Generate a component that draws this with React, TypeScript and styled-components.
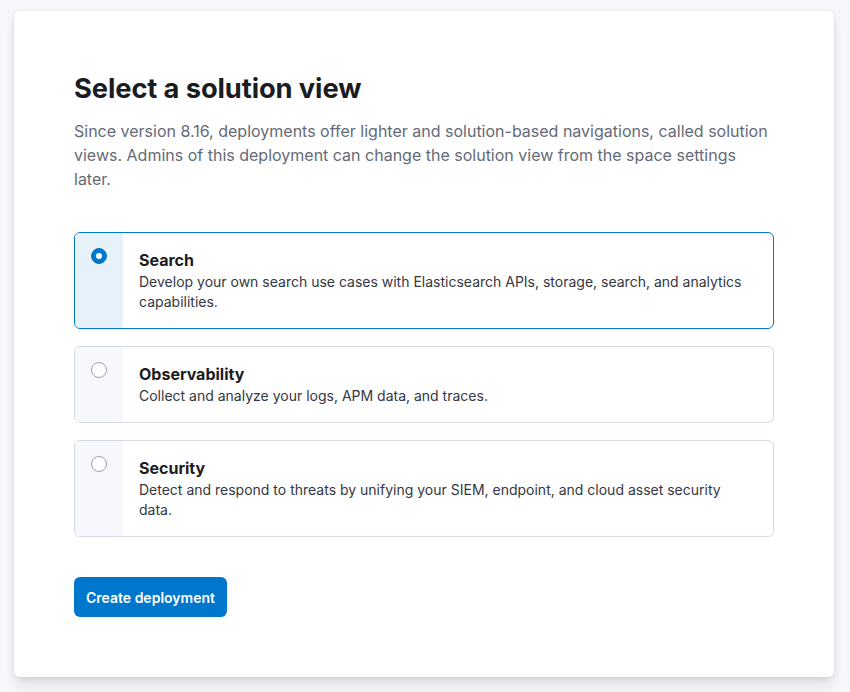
import React, { useState } from "react";
import styled, { createGlobalStyle } from "styled-components";

const Global = createGlobalStyle`
  html, body { margin: 0; padding: 0; background: #f6f7fb; }
  body { font-family: Inter, "Noto Sans", sans-serif; -webkit-font-smoothing: antialiased; }
  * { box-sizing: border-box; }
`;

const Page = styled.div`
  padding: 11px 16px 15px 14px;
  min-height: 692px;
`;

const Panel = styled.div`
  background: #fff;
  border-radius: 6px;
  box-shadow: 0 0.9px 4px -1px rgba(0,0,0,0.08), 0 2.6px 8px -1px rgba(0,0,0,0.06),
    0 5.7px 12px -1px rgba(0,0,0,0.05), 0 15px 15px -1px rgba(0,0,0,0.04);
  padding: 60px;
  display: flex;
  flex-direction: column;
`;

const Title = styled.h1`
  margin: 0;
  font-size: 27.3px;
  line-height: 36px;
  font-weight: 700;
  color: #1a1c21;
  letter-spacing: -0.1px;
`;

const Lead = styled.p`
  margin: 12px 0 0;
  font-size: 16px;
  line-height: 24px;
  color: #646a77;
`;

const Options = styled.div`
  margin-top: 41px;
  display: flex;
  flex-direction: column;
  gap: 17px;
`;

const Option = styled.label<{ $selected: boolean }>`
  display: flex;
  border: 1px solid ${(p) => (p.$selected ? "#0077cc" : "#d3dae6")};
  border-radius: 6px;
  overflow: hidden;
  cursor: pointer;
  background: #fff;
`;

const RadioCol = styled.div<{ $selected: boolean }>`
  width: 48px;
  flex: none;
  background: ${(p) => (p.$selected ? "#e6f1fa" : "#f7f8fc")};
  display: flex;
  justify-content: center;
  padding-top: 15px;
`;

const Radio = styled.span<{ $selected: boolean }>`
  width: 16px;
  height: 16px;
  border-radius: 50%;
  position: relative;
  background: ${(p) => (p.$selected ? "#0077cc" : "#fff")};
  border: 1px solid ${(p) => (p.$selected ? "#0077cc" : "#98a1b3")};
  &::after {
    content: "";
    display: ${(p) => (p.$selected ? "block" : "none")};
    position: absolute;
    left: 50%;
    top: 50%;
    width: 6px;
    height: 6px;
    margin: -3px 0 0 -3px;
    border-radius: 50%;
    background: #fff;
  }
`;

const Body = styled.div`
  padding: 15px 16px 16px 16px;
  display: flex;
  flex-direction: column;
`;

const OptTitle = styled.div`
  font-size: 16px;
  line-height: 24px;
  font-weight: 700;
  color: #1a1c21;
`;

const OptDesc = styled.div`
  font-size: 14px;
  line-height: 20px;
  color: #343741;
`;

const Button = styled.button`
  margin-top: 40px;
  align-self: flex-start;
  height: 40px;
  padding: 0 12px;
  border: none;
  border-radius: 6px;
  background: #0077cc;
  color: #fff;
  font-family: Inter, "Noto Sans", sans-serif;
  font-size: 14px;
  font-weight: 600;
  cursor: pointer;
`;

const options = [
  {
    id: "es",
    title: "Search",
    desc: "Develop your own search use cases with Elasticsearch APIs, storage, search, and analytics capabilities.",
  },
  {
    id: "oblt",
    title: "Observability",
    desc: "Collect and analyze your logs, APM data, and traces.",
  },
  {
    id: "security",
    title: "Security",
    desc: "Detect and respond to threats by unifying your SIEM, endpoint, and cloud asset security data.",
  },
];

export default function App() {
  const [selected, setSelected] = useState("es");
  return (
    <>
      <Global />
      <Page>
        <Panel>
          <Title>Select a solution view</Title>
          <Lead>
            Since version 8.16, deployments offer lighter and solution-based navigations, called solution
            views. Admins of this deployment can change the solution view from the space settings later.
          </Lead>
          <Options>
            {options.map((o) => {
              const s = o.id === selected;
              return (
                <Option key={o.id} $selected={s} onClick={() => setSelected(o.id)}>
                  <RadioCol $selected={s}>
                    <Radio $selected={s} />
                  </RadioCol>
                  <Body>
                    <OptTitle>{o.title}</OptTitle>
                    <OptDesc>{o.desc}</OptDesc>
                  </Body>
                </Option>
              );
            })}
          </Options>
          <Button>Create deployment</Button>
        </Panel>
      </Page>
    </>
  );
}
